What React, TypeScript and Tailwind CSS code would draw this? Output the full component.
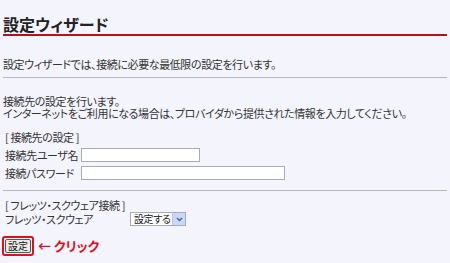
import React from 'react';

const font = "font-['Noto_Sans_CJK_JP','Noto_Sans',sans-serif] [font-feature-settings:'palt']";

const Field: React.FC<{ label: string; width: string }> = ({ label, width }) => (
  <div className="flex items-center h-[18px]">
    <span className="w-[81px] shrink-0 pl-[5px] whitespace-nowrap">{label}</span>
    <div className={`${width} h-[14px] bg-white border border-[#a5acb2]`} />
  </div>
);

export default function App() {
  return (
    <div className={`w-[450px] h-[263px] overflow-hidden bg-[#f4f4fc] text-[#333] text-[11px] leading-[12px] tracking-[-0.4px] whitespace-nowrap ${font}`}>
      {/* Title */}
      <div className="pt-[14px] px-[3px]">
        <h1 className="text-[16px] leading-[20px] font-bold tracking-normal text-[#222]">設定ウィザード</h1>
        <div className="h-[2px] bg-[#b5121b]" />
      </div>

      <p className="mt-[22px] px-[3px]">設定ウィザードでは、接続に必要な最低限の設定を行います。</p>
      <div className="mt-[7px] mx-[3px] border-t border-[#b8b8b8]" />

      <div className="mt-[17px] px-[3px]">
        <p>接続先の設定を行います。</p>
        <p>インターネットをご利用になる場合は、プロバイダから提供された情報を入力してください。</p>
      </div>

      {/* 接続先の設定 */}
      <p className="mt-[12px] pl-[5px]">[ 接続先の設定 ]</p>
      <div className="mt-[3px]">
        <Field label="接続先ユーザ名" width="w-[119px]" />
        <Field label="接続パスワード" width="w-[204px]" />
      </div>
      <div className="mt-[8px] mx-[3px] border-t border-[#b8b8b8]" />

      {/* フレッツ・スクウェア */}
      <p className="mt-[8px] pl-[5px]">[ フレッツ・スクウェア接続 ]</p>
      <div className="flex items-center h-[14px] mt-[1px]">
        <span className="w-[130px] shrink-0 pl-[5px]">フレッツ・スクウェア</span>
        <div className="flex items-center w-[56px] h-[14px] bg-white border border-[#a5acb2]">
          <span className="flex-1 pl-[3px] text-[10px] leading-[12px] text-[#222]">設定する</span>
          <span className="flex items-center justify-center w-[13px] h-[12px] bg-[#c8d8fa] border-l border-[#b0c4f0]">
            <svg width="7" height="5" viewBox="0 0 7 5">
              <path d="M1 1 L3.5 3.5 L6 1" fill="none" stroke="#4d6185" strokeWidth="1.5" />
            </svg>
          </span>
        </div>
      </div>

      {/* Button */}
      <div className="mt-[10px] flex items-center">
        <div className="ml-[2px] p-[1px] border-2 border-[#e0101a] rounded-[3px]">
          <button className="block px-[2px] h-[14px] text-[10px] leading-[12px] tracking-normal text-[#111] bg-[#ecebe6] border border-[#555] rounded-[2px]">
            設定
          </button>
        </div>
        <span className="ml-[4px] text-[13px] leading-[14px] font-bold tracking-normal text-[#e0101a]">← クリック</span>
      </div>
    </div>
  );
}
